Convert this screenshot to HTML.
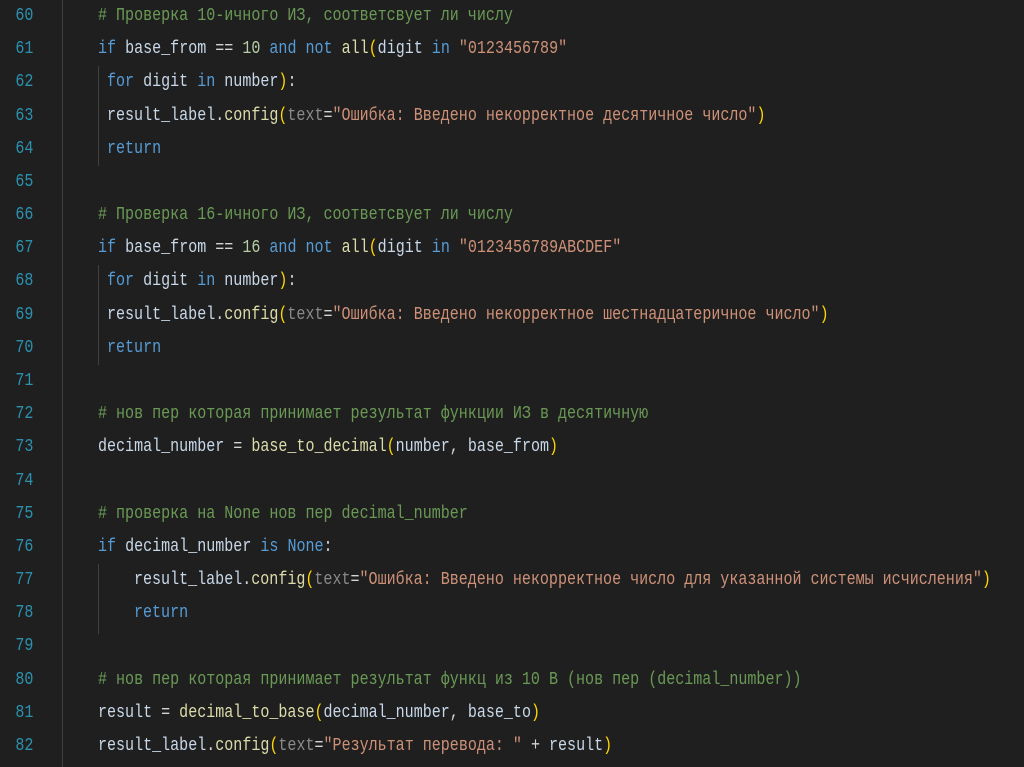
<!DOCTYPE html>
<html><head><meta charset="utf-8"><style>
body{margin:0;width:1024px;height:767px;background:#1f1f1f;overflow:hidden;font-family:"Liberation Mono","DejaVu Sans Mono",monospace;font-size:18px;}
.l{position:absolute;height:33px;line-height:33px;white-space:pre;color:#d4d4d4;transform:scaleX(0.835);transform-origin:0 0;}
.n{position:absolute;left:0;width:40px;text-align:right;color:#2b91af;height:33px;line-height:33px;transform:scaleX(0.835);transform-origin:0 0;}
.c{color:#6a9955}.k{color:#569cd6}.s{color:#ce9178}.d{color:#b5cea8}.f{color:#dcdcaa}.p{color:#ffd700}.g{color:#8a8a8a}.v{color:#c8d8e8}
.gd{position:absolute;width:1px;background:#404040}
</style></head><body>
<div class="gd" style="left:62px;top:0;height:767px"></div>
<div class="gd" style="left:98px;top:66px;height:100px"></div>
<div class="gd" style="left:98px;top:265px;height:100px"></div>
<div class="gd" style="left:98px;top:564px;height:70px"></div>
<div id="w"></div>
<script>
const L=[
[60,98,'<span class="c"># Проверка 10-ичного ИЗ, соответсвует ли числу</span>'],
[61,98,'<span class="k">if</span> <span class="v">base_from</span> == <span class="d">10</span> <span class="k">and not</span> <span class="f">all</span><span class="p">(</span><span class="v">digit</span> <span class="k">in</span> <span class="s">"0123456789"</span>'],
[62,107,'<span class="k">for</span> <span class="v">digit</span> <span class="k">in</span> <span class="v">number</span><span class="p">)</span>:'],
[63,107,'<span class="v">result_label</span>.<span class="f">config</span><span class="p">(</span><span class="g">text</span>=<span class="s">"Ошибка: Введено некорректное десятичное число"</span><span class="p">)</span>'],
[64,107,'<span class="k">return</span>'],
[65,98,''],
[66,98,'<span class="c"># Проверка 16-ичного ИЗ, соответсвует ли числу</span>'],
[67,98,'<span class="k">if</span> <span class="v">base_from</span> == <span class="d">16</span> <span class="k">and not</span> <span class="f">all</span><span class="p">(</span><span class="v">digit</span> <span class="k">in</span> <span class="s">"0123456789ABCDEF"</span>'],
[68,107,'<span class="k">for</span> <span class="v">digit</span> <span class="k">in</span> <span class="v">number</span><span class="p">)</span>:'],
[69,107,'<span class="v">result_label</span>.<span class="f">config</span><span class="p">(</span><span class="g">text</span>=<span class="s">"Ошибка: Введено некорректное шестнадцатеричное число"</span><span class="p">)</span>'],
[70,107,'<span class="k">return</span>'],
[71,98,''],
[72,98,'<span class="c"># нов пер которая принимает результат функции ИЗ в десятичную</span>'],
[73,98,'<span class="v">decimal_number</span> = <span class="f">base_to_decimal</span><span class="p">(</span><span class="v">number</span>, <span class="v">base_from</span><span class="p">)</span>'],
[74,98,''],
[75,98,'<span class="c"># проверка на None нов пер decimal_number</span>'],
[76,98,'<span class="k">if</span> <span class="v">decimal_number</span> <span class="k">is</span> <span class="k">None</span>:'],
[77,134,'<span class="v">result_label</span>.<span class="f">config</span><span class="p">(</span><span class="g">text</span>=<span class="s">"Ошибка: Введено некорректное число для указанной системы исчисления"</span><span class="p">)</span>'],
[78,134,'<span class="k">return</span>'],
[79,98,''],
[80,98,'<span class="c"># нов пер которая принимает результат функц из 10 В (нов пер (decimal_number))</span>'],
[81,98,'<span class="v">result</span> = <span class="f">decimal_to_base</span><span class="p">(</span><span class="v">decimal_number</span>, <span class="v">base_to</span><span class="p">)</span>'],
[82,98,'<span class="v">result_label</span>.<span class="f">config</span><span class="p">(</span><span class="g">text</span>=<span class="s">"Результат перевода: "</span> + <span class="v">result</span><span class="p">)</span>']
];
let h='';L.forEach((r,i)=>{const t=i*33.18;h+=`<div class="n" style="top:${t}px">${r[0]}</div><div class="l" style="top:${t}px;left:${r[1]}px">${r[2]}</div>`});
document.getElementById('w').innerHTML=h;
</script>
</body></html>
